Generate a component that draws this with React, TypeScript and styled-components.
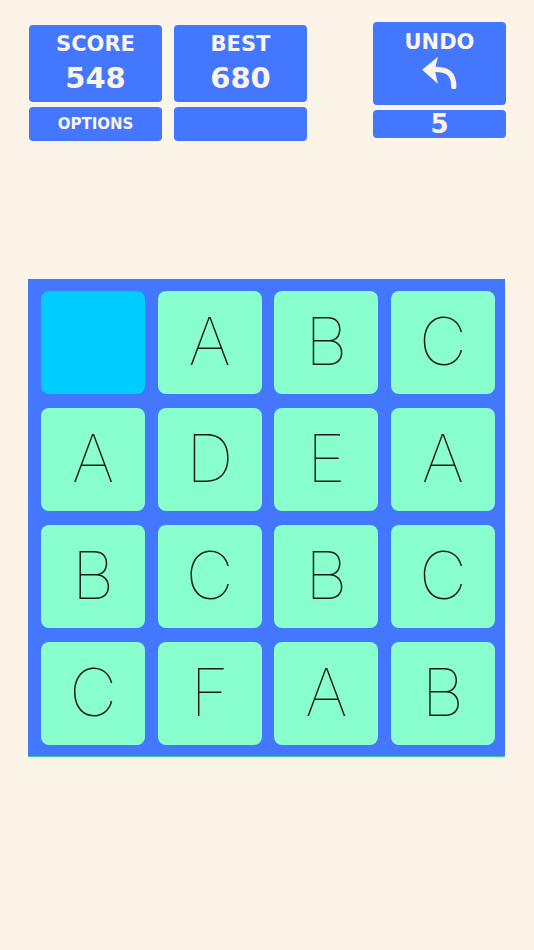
import * as React from 'react';
import styled, { createGlobalStyle } from 'styled-components';

const cream = '#fcf4e8';
const blue = '#4477ff';

const GlobalStyle = createGlobalStyle`
  html, body {
    margin: 0;
    padding: 0;
    background: ${cream};
  }
  body {
    font-family: 'DejaVu Sans', Verdana, sans-serif;
  }
`;

const Page = styled.div`
  width: 534px;
  height: 950px;
  background: ${cream};
  box-sizing: border-box;
  padding: 22px 28px 0 29px;
`;

const Header = styled.div`
  display: flex;
  align-items: flex-start;
`;

const Column = styled.div<{ $gap: number; $offset?: number }>`
  display: flex;
  flex-direction: column;
  gap: ${(p) => p.$gap}px;
  width: 133px;
  margin-top: ${(p) => p.$offset || 0}px;
`;

const Panel = styled.div<{ $height: number; $top?: boolean }>`
  background: ${blue};
  border-radius: 4px;
  height: ${(p) => p.$height}px;
  box-sizing: border-box;
  color: ${cream};
  display: flex;
  flex-direction: column;
  align-items: center;
  justify-content: ${(p) => (p.$top ? 'flex-start' : 'center')};
  padding-top: ${(p) => (p.$top ? 10 : 0)}px;
  font-weight: bold;
`;

const Label = styled.div<{ $size: number }>`
  font-size: ${(p) => p.$size}px;
  line-height: 1;
`;

const Value = styled.div`
  font-size: 29px;
  line-height: 1;
  margin-top: 9px;
`;

const Board = styled.div`
  margin-top: 138px;
  margin-left: -1px;
  width: 477px;
  height: 478px;
  box-sizing: border-box;
  background: ${blue};
  border-bottom: 1px solid #3ccf8e;
  padding: 12px 10px 11px 13px;
  display: grid;
  grid-template-columns: repeat(4, 1fr);
  grid-template-rows: repeat(4, 1fr);
  column-gap: 12.5px;
  row-gap: 14px;
`;

const Tile = styled.div<{ $active?: boolean }>`
  background: ${(p) => (p.$active ? '#00ccff' : '#88ffcc')};
  border-radius: 8px;
  display: flex;
  align-items: center;
  justify-content: center;
  padding-bottom: 3px;
  font-family: Inter, 'Noto Sans', sans-serif;
  font-weight: 100;
  font-size: 66px;
  color: #1a1a1a;
  line-height: 1;
`;

const UndoIcon = () => (
  <svg width="38" height="36" viewBox="0 0 36 34" style={{ marginTop: 0, marginLeft: -2 }}>
    <path
      d="M14 15.5 C26 15.5 32 19 32 32"
      fill="none"
      stroke={cream}
      strokeWidth="5"
      strokeLinecap="round"
    />
    <path d="M2 15.7 L17 3.5 L14 16 L17 29 Z" fill={cream} />
  </svg>
);

const letters = ['', 'A', 'B', 'C', 'A', 'D', 'E', 'A', 'B', 'C', 'B', 'C', 'C', 'F', 'A', 'B'];

export default function App() {
  return (
    <Page>
      <GlobalStyle />
      <Header>
        <Column $gap={5} $offset={3}>
          <Panel $height={77}>
            <Label $size={21}>SCORE</Label>
            <Value>548</Value>
          </Panel>
          <Panel $height={34}>
            <Label $size={15}>OPTIONS</Label>
          </Panel>
        </Column>
        <Column $gap={5} $offset={3} style={{ marginLeft: 12 }}>
          <Panel $height={77}>
            <Label $size={21}>BEST</Label>
            <Value>680</Value>
          </Panel>
          <Panel $height={34} />
        </Column>
        <Column $gap={5} style={{ marginLeft: 'auto' }}>
          <Panel $height={83} $top>
            <Label $size={21}>UNDO</Label>
            <UndoIcon />
          </Panel>
          <Panel $height={28}>
            <Label $size={26}>5</Label>
          </Panel>
        </Column>
      </Header>
      <Board>
        {letters.map((l, i) => (
          <Tile key={i} $active={i === 0}>
            {l}
          </Tile>
        ))}
      </Board>
    </Page>
  );
}
